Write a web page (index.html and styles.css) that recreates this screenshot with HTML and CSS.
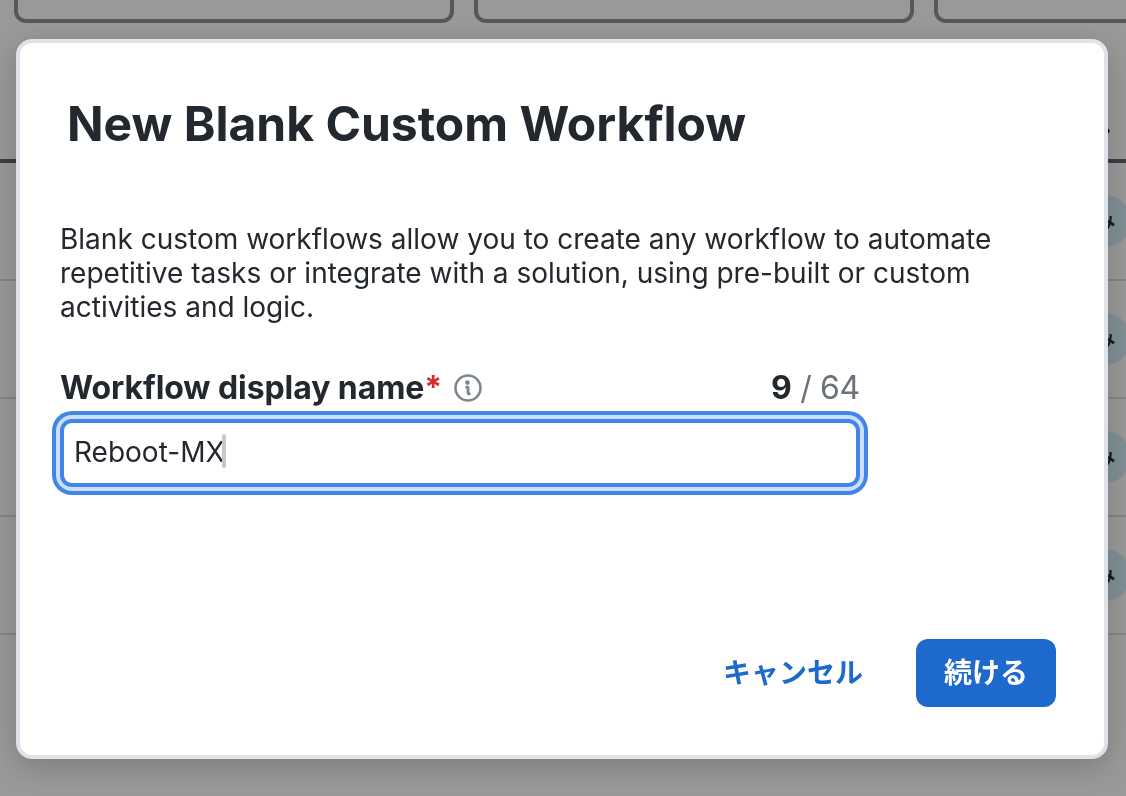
FILE: index.html
```html
<!DOCTYPE html>
<html lang="ja">
  <head>
    <meta charset="UTF-8" />
    <meta name="viewport" content="width=device-width, initial-scale=1.0" />
    <title>New Blank Custom Workflow</title>
    <link rel="stylesheet" href="styles.css">
  </head>
  <body>
    <div class="page">
      <div class="cards">
        <div class="card"></div>
        <div class="card"></div>
        <div class="card card-last"></div>
      </div>
      <div class="table">
        <div class="table-head">
          <svg class="sort-icon" width="12" height="12" viewBox="0 0 12 12">
            <path d="M2 1h6l3 4-3 4H2z" fill="#111" />
          </svg>
        </div>
        <div class="table-row"><span class="badge">検証済み</span></div>
        <div class="table-row"><span class="badge">検証済み</span></div>
        <div class="table-row"><span class="badge">検証済み</span></div>
        <div class="table-row"><span class="badge">検証済み</span></div>
      </div>
    </div>

    <div class="overlay">
      <div class="modal">
        <h1>New Blank Custom Workflow</h1>
        <p class="description">
          Blank custom workflows allow you to create any workflow to automate<br />
          repetitive tasks or integrate with a solution, using pre-built or custom<br />
          activities and logic.
        </p>
        <div class="field">
          <div class="field-header">
            <label class="label">Workflow display name<span class="required">*</span></label>
            <svg class="info-icon" width="28" height="28" viewBox="0 0 28 28" fill="none">
              <circle cx="14" cy="14" r="12.5" stroke="#7e868f" stroke-width="2.6" />
              <circle cx="13.4" cy="8.6" r="2.3" fill="#7e868f" />
              <path d="M12.6 13.2h1.4v5.2q0 1.4 1.4 1.4" stroke="#7e868f" stroke-width="2.8" stroke-linecap="round" stroke-linejoin="round" />
            </svg>
            <span class="counter"><b>9</b> / 64</span>
          </div>
          <div class="input"><span class="value">Reboot-MX</span><span class="caret"></span></div>
        </div>
        <div class="actions">
          <button class="btn btn-cancel">キャンセル</button>
          <button class="btn btn-primary">続ける</button>
        </div>
      </div>
    </div>
  </body>
</html>
```
FILE: styles.css
```css
* {
  box-sizing: border-box;
}

body {
  margin: 0;
  height: 796px;
  overflow: hidden;
  background-color: #fff;
  color: #23282e;
  font-family: Inter, "Noto Sans CJK JP", sans-serif;
}

.page {
  overflow: hidden;
}

.cards {
  display: flex;
  gap: 20px;
  padding-left: 14px;
}

.card {
  flex: none;
  width: 440px;
  height: 23px;
  border: 4px solid #89939b;
  border-top: none;
  border-radius: 0 0 12px 12px;
}

.card-last {
  flex: 1;
  border-right: none;
  border-radius: 0 0 0 12px;
}

.table-head {
  display: flex;
  justify-content: flex-end;
  align-items: flex-end;
  height: 140px;
  padding: 0 15px 21px 0;
  border-bottom: 4px solid #606971;
}

.table-row {
  display: flex;
  justify-content: flex-end;
  align-items: center;
  height: 118px;
  border-bottom: 2px solid #dedede;
}

.badge {
  height: 52px;
  margin-right: -5px;
  padding: 0 15px 0 24px;
  border-radius: 26px;
  background-color: #d6f0fa;
  font-size: 28px;
  line-height: 52px;
}

.overlay {
  position: fixed;
  inset: 0;
  padding: 39px 18px 37px 16px;
  background-color: rgba(0, 0, 0, 0.4);
}

.modal {
  display: flex;
  flex-direction: column;
  height: 720px;
  padding: 52px 48px 48px 40px;
  border: 4px solid #dfe2e8;
  border-radius: 16px;
  background-color: #fff;
  box-shadow: 0 8px 32px rgba(0, 0, 0, 0.2);
}

h1 {
  margin: 0 0 69px 7px;
  font-size: 48px;
  font-weight: 700;
  line-height: 58px;
}

.description {
  margin: 0;
  font-size: 28px;
  line-height: 34px;
  letter-spacing: 0.01px;
  white-space: nowrap;
}

.field {
  width: 800px;
  margin-top: 43px;
}

.field-header {
  display: flex;
  align-items: center;
  height: 40px;
  margin-bottom: 12px;
  font-size: 32px;
}

.label {
  font-weight: 700;
  letter-spacing: -0.08px;
}

.required {
  color: #d02c32;
}

.info-icon {
  margin: 2px 0 0 12px;
}

.counter {
  margin-left: auto;
  color: #6a717c;
  letter-spacing: -0.3px;
}

.counter b {
  color: #23282e;
}

.input {
  display: flex;
  align-items: center;
  height: 68px;
  padding: 0 10px;
  border: 4px solid #4085e7;
  border-radius: 12px;
  font-size: 28px;
  box-shadow: 0 0 0 4px #cddffa, 0 0 0 8px #4085e7;
}

.value {
  margin-top: -2px;
}

.caret {
  width: 4px;
  height: 34px;
  margin: -4px 0 0 -3px;
  border-radius: 2px;
  background-color: #c6c7c8;
}

.actions {
  display: flex;
  justify-content: flex-end;
  gap: 27px;
  margin-top: auto;
}

.btn {
  height: 68px;
  padding: 0 26px 4px;
  border: none;
  border-radius: 12px;
  font-family: "Noto Sans CJK JP", sans-serif;
  font-size: 28px;
  font-weight: 700;
  cursor: pointer;
}

.btn-cancel {
  background: none;
  color: #1d69cc;
}

.btn-primary {
  width: 140px;
  background-color: #1d69cc;
  color: #fff;
}
```
